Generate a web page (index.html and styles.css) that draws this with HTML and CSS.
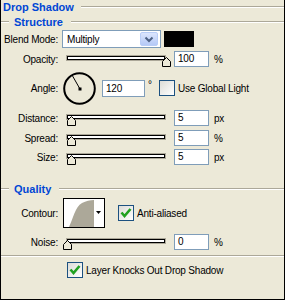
FILE: index.html
```html
<!DOCTYPE html>
<html>
<head>
    <title>Drop Shadow</title>
    <link rel="stylesheet" href="styles.css">
</head>
<body>
<div class="panel">
    <div class="group-title"><span class="title-text">Drop Shadow</span><span class="etch"></span></div>
    <div class="legend"><span class="etch lead"></span><span class="legend-text">Structure</span><span class="etch"></span></div>

    <div class="row blend-row">
        <span class="lbl">Blend Mode:</span>
        <div class="select">
            <span class="select-val">Multiply</span>
            <span class="select-btn"><svg width="10" height="7" viewBox="0 0 10 7"><path d="M1.5 1.5 L5 5 L8.5 1.5" fill="none" stroke="#4d6185" stroke-width="2"/></svg></span>
        </div>
        <div class="swatch"></div>
    </div>

    <div class="row slider-row opacity-row">
        <span class="lbl">Opacity:</span>
        <div class="slider"><div class="track"></div><svg class="thumb" style="left: 96px" width="9" height="10" viewBox="0 0 9 10"><polygon points="0.5,9.5 0.5,4.5 4.5,0.5 8.5,4.5 8.5,9.5" fill="#ece9d8" stroke="#000"/></svg></div>
        <div class="field">100</div>
        <span class="unit">%</span>
    </div>

    <div class="row angle-row">
        <span class="lbl">Angle:</span>
        <svg class="dial" width="33" height="33" viewBox="0 0 33 33">
            <circle cx="16.5" cy="16.5" r="15.3" fill="none" stroke="#000" stroke-width="2"/>
            <line x1="17" y1="17" x2="9" y2="3" stroke="#000" stroke-width="1"/>
            <rect x="15.5" y="15.5" width="3" height="3" fill="#000"/>
        </svg>
        <div class="field angle-field">120</div>
        <span class="deg">°</span>
        <span class="check"></span>
        <span class="check-text">Use Global Light</span>
    </div>

    <div class="row slider-row distance-row">
        <span class="lbl">Distance:</span>
        <div class="slider"><div class="track"></div><svg class="thumb" style="left: 1px" width="9" height="10" viewBox="0 0 9 10"><polygon points="0.5,9.5 0.5,4.5 4.5,0.5 8.5,4.5 8.5,9.5" fill="#ece9d8" stroke="#000"/></svg></div>
        <div class="field">5</div>
        <span class="unit">px</span>
    </div>

    <div class="row slider-row spread-row">
        <span class="lbl">Spread:</span>
        <div class="slider"><div class="track"></div><svg class="thumb" style="left: 1px" width="9" height="10" viewBox="0 0 9 10"><polygon points="0.5,9.5 0.5,4.5 4.5,0.5 8.5,4.5 8.5,9.5" fill="#ece9d8" stroke="#000"/></svg></div>
        <div class="field">5</div>
        <span class="unit">%</span>
    </div>

    <div class="row slider-row size-row">
        <span class="lbl">Size:</span>
        <div class="slider"><div class="track"></div><svg class="thumb" style="left: 1px" width="9" height="10" viewBox="0 0 9 10"><polygon points="0.5,9.5 0.5,4.5 4.5,0.5 8.5,4.5 8.5,9.5" fill="#ece9d8" stroke="#000"/></svg></div>
        <div class="field">5</div>
        <span class="unit">px</span>
    </div>

    <div class="legend quality"><span class="etch lead"></span><span class="legend-text">Quality</span><span class="etch"></span></div>

    <div class="row contour-row">
        <span class="lbl">Contour:</span>
        <div class="contour">
            <svg width="40" height="28" viewBox="0 0 40 28">
                <path d="M5 28 C9 20 11 8 18 4 C22 2 26 1 30 1 L30 28 Z" fill="#aca899"/>
                <polygon points="32,12 37,12 34.5,15" fill="#000"/>
            </svg>
        </div>
        <span class="check checked"><svg width="14" height="14" viewBox="0 0 14 14"><path d="M2.5 6.5 L5.5 10 L11.5 3" fill="none" stroke="#21a121" stroke-width="2.6"/></svg></span>
        <span class="check-text">Anti-aliased</span>
    </div>

    <div class="row slider-row noise-row">
        <span class="lbl">Noise:</span>
        <div class="slider"><div class="track"></div><svg class="thumb" style="left: -3px" width="9" height="10" viewBox="0 0 9 10"><polygon points="0.5,9.5 0.5,4.5 4.5,0.5 8.5,4.5 8.5,9.5" fill="#ece9d8" stroke="#000"/></svg></div>
        <div class="field">0</div>
        <span class="unit">%</span>
    </div>

    <div class="separator etch"></div>

    <div class="row knock-row">
        <span class="check checked"><svg width="14" height="14" viewBox="0 0 14 14"><path d="M2.5 6.5 L5.5 10 L11.5 3" fill="none" stroke="#21a121" stroke-width="2.6"/></svg></span>
        <span class="check-text">Layer Knocks Out Drop Shadow</span>
    </div>
</div>
</body>
</html>
```

FILE: styles.css
```css
body {
    margin: 0;
    background: #ece9d8;
    font-family: "Liberation Sans", Arial, sans-serif;
    font-size: 10px;
    letter-spacing: -0.2px;
    color: #000;
}

.panel {
    width: 285px;
    height: 300px;
    box-sizing: border-box;
    border-left: 1px solid #000;
    border-right: 1px solid #000;
    border-bottom: 1px solid #000;
    overflow: hidden;
}

.etch {
    flex: 1;
    height: 0;
    border-top: 1px solid #aca899;
    border-bottom: 1px solid #fff;
}

.group-title {
    display: flex;
    align-items: center;
    height: 14px;
    padding-left: 2px;
}
.title-text {
    font-weight: bold;
    font-size: 11px;
    letter-spacing: 0;
    color: #0046d5;
    margin-right: 7px;
}

.legend {
    display: flex;
    align-items: center;
    height: 14px;
    margin-top: 1px;
}
.legend .lead {
    flex: 0 0 8px;
    margin-right: 5px;
}
.legend-text {
    font-weight: bold;
    font-size: 11px;
    letter-spacing: 0;
    color: #0046d5;
    margin-right: 8px;
}
.legend.quality {
    margin-top: 17px;
}

.row {
    display: flex;
    align-items: center;
}
.lbl {
    flex: none;
    width: 57px;
    text-align: right;
}

/* blend mode */
.blend-row {
    height: 18px;
    margin-top: 1px;
}
.select {
    box-sizing: border-box;
    width: 99px;
    height: 18px;
    margin-left: 4px;
    border: 1px solid #7f9db9;
    background: #fff;
    display: flex;
    align-items: center;
    justify-content: space-between;
    padding: 0 2px 0 4px;
}
.select-btn {
    box-sizing: border-box;
    width: 18px;
    height: 14px;
    border: 1px solid #b9cdf7;
    border-radius: 2px;
    background: linear-gradient(#dbe5fd, #b5c9f6);
    display: flex;
    align-items: center;
    justify-content: center;
}
.swatch {
    width: 30px;
    height: 16px;
    margin-left: 3px;
    background: #000;
}

/* sliders */
.slider-row {
    height: 16px;
}
.opacity-row { margin-top: 3px; }
.distance-row { margin-top: 5px; }
.spread-row { margin-top: 4px; }
.size-row { margin-top: 3px; }
.noise-row { margin-top: 6px; }

.slider {
    position: relative;
    width: 100px;
    height: 16px;
    margin-left: 8px;
}
.track {
    box-sizing: border-box;
    margin-top: 4px;
    height: 6px;
    border: 1px solid #aca899;
    background: #fff;
    box-shadow: inset 0 0 0 1px #000;
}
.thumb {
    position: absolute;
    top: 6px;
}

.field {
    box-sizing: border-box;
    width: 35px;
    height: 16px;
    margin-left: 8px;
    padding-left: 3px;
    border: 1px solid #7f9db9;
    background: #fff;
    line-height: 14px;
}
.unit {
    margin-left: 5px;
}

/* angle */
.angle-row {
    height: 34px;
    margin-top: 4px;
}
.dial {
    margin-left: 5px;
}
.angle-field {
    width: 43px;
    height: 17px;
    margin-left: 6px;
    line-height: 15px;
}
.deg {
    width: 14px;
    padding-left: 3px;
    box-sizing: border-box;
    align-self: flex-start;
    margin-top: 8px;
}

/* checkboxes */
.check {
    box-sizing: border-box;
    width: 16px;
    height: 16px;
    border: 1px solid #1c5180;
    background: linear-gradient(135deg, #dcdcd7, #fff);
    display: flex;
    align-items: center;
    justify-content: center;
}
.check-text {
    margin-left: 3px;
}

/* quality */
.contour-row {
    height: 30px;
    margin-top: 2px;
}
.contour {
    box-sizing: border-box;
    width: 42px;
    height: 30px;
    margin-left: 5px;
    border: 1px solid #000;
    background: #fff;
    display: flex;
}
.contour-row .check {
    margin-left: 13px;
}

.separator {
    flex: none;
    margin-top: 5px;
}

.knock-row {
    height: 16px;
    margin-top: 5px;
    padding-left: 66px;
}
```
